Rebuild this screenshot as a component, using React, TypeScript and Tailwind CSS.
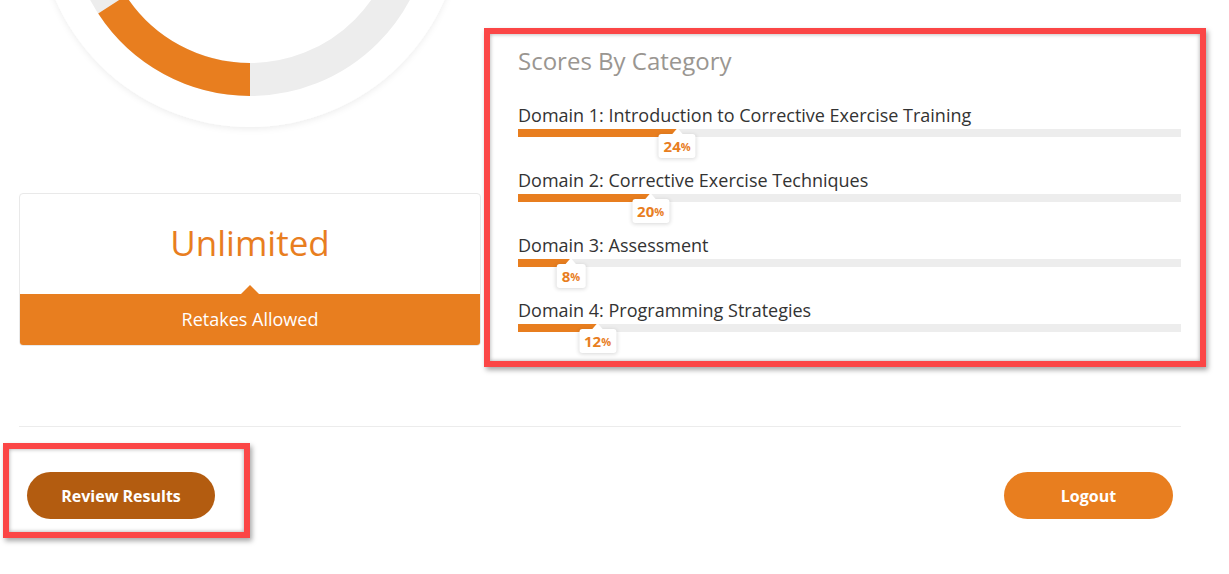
const SCORES = [
  { label: "Domain 1: Introduction to Corrective Exercise Training", pct: 24 },
  { label: "Domain 2: Corrective Exercise Techniques", pct: 20 },
  { label: "Domain 3: Assessment", pct: 8 },
  { label: "Domain 4: Programming Strategies", pct: 12 },
];

function Donut() {
  // center sits above the fold, only the lower part of the gauge is visible
  return (
    <svg width="462" height="193" viewBox="0 0 462 193" className="block">
      <defs>
        <filter id="disc" x="-20%" y="-20%" width="140%" height="140%">
          <feDropShadow dx="0" dy="2" stdDeviation="3" floodColor="#000" floodOpacity="0.07" />
        </filter>
      </defs>
      <circle cx="231" cy="-85" r="212" fill="#fff" filter="url(#disc)" />
      <circle cx="231" cy="-85" r="164.5" fill="none" stroke="#ededed" strokeWidth="33" />
      <path
        d="M 231 79.5 A 164.5 164.5 0 0 1 93.04 4.6"
        fill="none"
        stroke="#e87e1f"
        strokeWidth="33"
      />
    </svg>
  );
}

function ScoreRow({ label, pct, last }: { label: string; pct: number; last: boolean }) {
  return (
    <div className={last ? "" : "mb-[31px]"}>
      <div className="text-[18px] leading-6 text-[#333]">{label}</div>
      <div className="relative mt-[2px] h-2 bg-[#ededed]">
        <div className="h-full bg-[#e87e1f]" style={{ width: `${pct}%` }} />
        <div
          className="absolute top-[5px] -translate-x-1/2"
          style={{ left: `${pct}%` }}
        >
          <div className="relative flex h-[24px] items-center rounded-[3px] bg-white px-[5px] shadow-[0_1px_4px_rgba(0,0,0,0.16)]">
            <div className="absolute -top-[6px] left-1/2 h-0 w-0 -translate-x-1/2 border-x-[6px] border-b-[7px] border-x-transparent border-b-white" />
            <span className="text-[15px] font-bold leading-none text-[#e87e1f]">{pct}</span>
            <span className="text-[11px] font-bold leading-none text-[#e87e1f]">%</span>
          </div>
        </div>
      </div>
    </div>
  );
}

export default function App() {
  return (
    <div className="h-[574px] w-full overflow-hidden bg-white font-['Open_Sans',sans-serif]">
      <div className="w-[1181px] pl-[19px]">
        <div className="flex">
          <div className="w-[462px] shrink-0">
            <Donut />
            <div className="overflow-hidden rounded-[4px] border border-[#e9e9e9]">
              <div className="flex h-[100px] items-center justify-center pb-[3px]">
                <span className="text-[35px] leading-none text-[#e87e1f]">Unlimited</span>
              </div>
              <div className="relative flex h-[51px] items-center justify-center bg-[#e87e1f]">
                <div className="absolute -top-[9px] left-1/2 h-0 w-0 -translate-x-1/2 border-x-[9px] border-b-[9px] border-x-transparent border-b-[#e87e1f]" />
                <span className="text-[18px] text-white">Retakes Allowed</span>
              </div>
            </div>
          </div>

          <div className="relative flex-1 pl-[37px] pt-[45px]">
            <h2 className="text-[24px] leading-8 text-[#9a9691]">Scores By Category</h2>
            <div className="mt-[26px]">
              {SCORES.map((s, i) => (
                <ScoreRow key={s.label} label={s.label} pct={s.pct} last={i === SCORES.length - 1} />
              ))}
            </div>
            <div className="pointer-events-none absolute left-[3px] top-[28px] h-[339px] w-[722px] border-[6px] border-[#fb4646] shadow-[2px_3px_5px_rgba(0,0,0,0.35),inset_0_0_4px_rgba(0,0,0,0.35)]" />
          </div>
        </div>

        <div className="mt-[80px] border-t border-[#ececec]" />

        <div className="mt-[45px] flex items-center justify-between">
          <div className="relative ml-[8px]">
            <button className="h-[47px] w-[188px] rounded-full bg-[#b35c10] text-[16px] font-bold text-white">
              Review Results
            </button>
            <div className="pointer-events-none absolute -left-[24px] -top-[29px] h-[95px] w-[247px] border-[6px] border-[#fb4646] shadow-[2px_3px_5px_rgba(0,0,0,0.35),inset_0_0_4px_rgba(0,0,0,0.35)]" />
          </div>
          <button className="mr-[8px] h-[47px] w-[169px] rounded-full bg-[#e87e1f] text-[16px] font-bold text-white">
            Logout
          </button>
        </div>
      </div>
    </div>
  );
}
